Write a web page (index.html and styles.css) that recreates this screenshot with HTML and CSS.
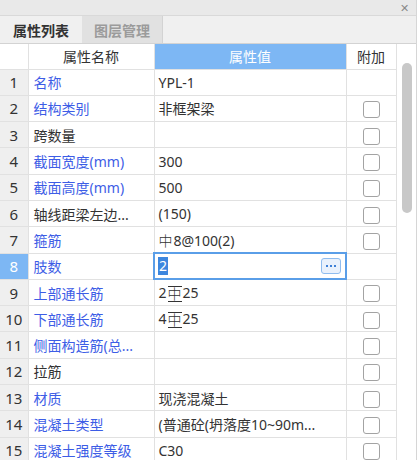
FILE: index.html
```html
<!DOCTYPE html>
<html lang="zh-CN">
<head>
  <meta charset="UTF-8">
  <title>属性列表</title>
  <link rel="stylesheet" href="styles.css">
</head>
<body>

<div class="panel">
  <div class="titlebar">
    <span class="close">&#x2715;</span>
  </div>

  <div class="tabs">
    <div class="tab active">属性列表</div>
    <div class="tab">图层管理</div>
  </div>

  <div class="grid-wrap">
    <table class="grid">
      <colgroup>
        <col class="c-num">
        <col class="c-name">
        <col class="c-value">
        <col class="c-add">
      </colgroup>
      <thead>
        <tr>
          <th class="num"></th>
          <th>属性名称</th>
          <th class="current">属性值</th>
          <th>附加</th>
        </tr>
      </thead>
      <tbody>
        <tr><td class="num">1</td><td class="name link">名称</td><td class="value">YPL-1</td><td class="add"></td></tr>
        <tr><td class="num">2</td><td class="name link">结构类别</td><td class="value">非框架梁</td><td class="add"><span class="check"></span></td></tr>
        <tr><td class="num">3</td><td class="name">跨数量</td><td class="value"></td><td class="add"><span class="check"></span></td></tr>
        <tr><td class="num">4</td><td class="name link">截面宽度(mm)</td><td class="value">300</td><td class="add"><span class="check"></span></td></tr>
        <tr><td class="num">5</td><td class="name link">截面高度(mm)</td><td class="value">500</td><td class="add"><span class="check"></span></td></tr>
        <tr><td class="num">6</td><td class="name" title="轴线距梁左边线距离(mm)">轴线距梁左边...</td><td class="value">(150)</td><td class="add"><span class="check"></span></td></tr>
        <tr><td class="num">7</td><td class="name link">箍筋</td><td class="value"><span class="bar">中</span>8@100(2)</td><td class="add"><span class="check"></span></td></tr>
        <tr class="selected">
          <td class="num">8</td>
          <td class="name link">肢数</td>
          <td class="value editing">
            <div class="editor">
              <span class="sel">2</span>
              <span class="more"><i></i><i></i><i></i></span>
            </div>
          </td>
          <td class="add"></td>
        </tr>
        <tr><td class="num">9</td><td class="name link">上部通长筋</td><td class="value">2<span class="bar hrb">中</span>25</td><td class="add"><span class="check"></span></td></tr>
        <tr><td class="num">10</td><td class="name link">下部通长筋</td><td class="value">4<span class="bar hrb">中</span>25</td><td class="add"><span class="check"></span></td></tr>
        <tr><td class="num">11</td><td class="name link" title="侧面构造筋(总配筋值)">侧面构造筋(总...</td><td class="value"></td><td class="add"><span class="check"></span></td></tr>
        <tr><td class="num">12</td><td class="name">拉筋</td><td class="value"></td><td class="add"><span class="check"></span></td></tr>
        <tr><td class="num">13</td><td class="name link">材质</td><td class="value">现浇混凝土</td><td class="add"><span class="check"></span></td></tr>
        <tr><td class="num">14</td><td class="name link">混凝土类型</td><td class="value" title="(普通砼(坍落度10~90mm),碎石粒径20mm)">(普通砼(坍落度10~90m...</td><td class="add"><span class="check"></span></td></tr>
        <tr><td class="num">15</td><td class="name link">混凝土强度等级</td><td class="value">C30</td><td class="add"><span class="check"></span></td></tr>
      </tbody>
    </table>

    <div class="scrollbar">
      <div class="thumb"></div>
    </div>
  </div>
</div>

</body>
</html>
```

FILE: styles.css
```css
* {
  box-sizing: border-box;
}

html, body {
  margin: 0;
  padding: 0;
  background: #fff;
}

body {
  width: 417px;
  height: 460px;
  overflow: hidden;
  font-family: "Noto Sans", "Noto Sans CJK SC", sans-serif;
  font-size: 14px;
  color: #333;
}

.panel {
  width: 417px;
  height: 460px;
  display: flex;
  flex-direction: column;
  border-right: 1px solid #d6d6d6;
}

.titlebar {
  height: 16px;
  background: #e9e9e9;
  border-bottom: 1px solid #d9d9d9;
  display: flex;
  justify-content: flex-end;
  align-items: center;
  padding-right: 7px;
}

.close {
  font-size: 11px;
  line-height: 1;
  color: #8a8a8a;
}

.tabs {
  height: 28px;
  background: #f0f0f0;
  border-bottom: 1px solid #d3d3d3;
  display: flex;
}

.tab {
  width: 81px;
  display: flex;
  align-items: center;
  justify-content: center;
  font-weight: 700;
  font-size: 14px;
  color: #9b9b9b;
  background: #e1e1e1;
  border-right: 1px solid #d3d3d3;
}

.tab.active {
  color: #333;
  background: #f0f0f0;
  border-right: none;
  width: 82px;
}

.grid-wrap {
  flex: 1;
  display: flex;
  overflow: hidden;
}

.grid {
  width: 396px;
  border-collapse: collapse;
  table-layout: fixed;
}

.c-num { width: 28px; }
.c-name { width: 126px; }
.c-value { width: 192px; }
.c-add { width: 50px; }

.grid th,
.grid td {
  border: 1px solid #e1e1e1;
  padding: 0;
  white-space: nowrap;
  overflow: hidden;
}

.grid th {
  height: 25px;
  font-weight: 400;
  text-align: center;
  color: #333;
  border-top: none;
}

.grid th.current {
  background: #7db7f4;
  color: #fff;
}

.grid th.num,
.grid td.num {
  border-left: none;
}

.grid td {
  height: 26.3px;
}

.grid td.num {
  background: #efefef;
  text-align: center;
  font-size: 15px;
  color: #333;
}

.grid td.name {
  padding-left: 5px;
  color: #333;
}

.grid td.name.link {
  color: #3d5de6;
}

.grid td.value {
  padding-left: 4px;
  color: #333;
}

.grid td.add {
  text-align: center;
}

.grid tr.selected td.num {
  background: #7db7f4;
  color: #fff;
}

.grid td.value.editing {
  padding: 0;
  border: 2px solid #5a9ee8;
}

.editor {
  display: flex;
  align-items: center;
  justify-content: space-between;
  padding: 0 4px 0 3px;
}

.sel {
  background: #3d86de;
  color: #fff;
  padding: 0 1px;
  line-height: 18px;
}

.more {
  width: 20px;
  height: 16px;
  border: 1px solid #8fbcef;
  border-radius: 3px;
  background: #e9f1fc;
  display: flex;
  align-items: center;
  justify-content: center;
  gap: 2px;
}

.more i {
  width: 2px;
  height: 2px;
  background: #3d7fd6;
}

.check {
  display: inline-block;
  width: 17px;
  height: 17px;
  border: 1px solid #a3a3a3;
  border-radius: 3px;
  vertical-align: middle;
  background: #fff;
}

.bar {
  font-weight: 300;
  margin-right: 1px;
}

.bar.hrb {
  display: inline-block;
  line-height: 14px;
  border-top: 1px solid #333;
  border-bottom: 1px solid #333;
  margin: 0 1px;
  padding: 0;
  vertical-align: -1px;
}

.scrollbar {
  width: 20px;
  padding: 19px 0 0 5px;
}

.thumb {
  width: 10px;
  height: 150px;
  background: #c8c8c8;
  border-radius: 5px;
}
```
